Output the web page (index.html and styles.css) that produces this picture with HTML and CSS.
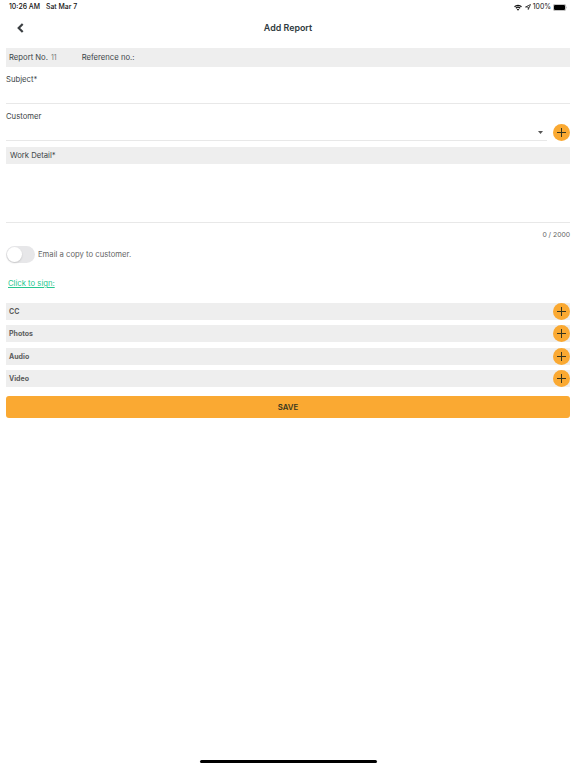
FILE: index.html
```
<!DOCTYPE html>
<html lang="en">
  <head>
    <meta charset="utf-8" />
    <title>Add Report</title>
    <link rel="stylesheet" href="styles.css">
  </head>

  <body>
    <div class="status-bar">
      <span class="time">10:26 AM</span>
      <span class="date">Sat Mar 7</span>
      <div class="status-icons">
        <svg class="wifi" width="8" height="7" viewBox="0 0 16 13">
          <path d="M1 5a10 10 0 0 1 14 0M3.7 8a6.2 6.2 0 0 1 8.6 0" fill="none" stroke="#111" stroke-width="2.3" />
          <path d="M5.6 10.2a3.5 3.5 0 0 1 4.8 0L8 12.8z" fill="#111" />
        </svg>
        <svg class="location" width="6" height="6" viewBox="0 0 12 12">
          <path d="M1 6L11 1L6.5 11V6z" fill="none" stroke="#222" stroke-width="1.6" />
        </svg>
        <span class="percent">100%</span>
        <svg class="battery" width="15" height="7" viewBox="0 0 15 7">
          <rect x="0.3" y="0.3" width="12.4" height="6.4" rx="1.6" fill="none" stroke="#888" stroke-width="0.6" />
          <rect x="1" y="1" width="11" height="5" rx="1" fill="#000" />
          <path d="M13.5 2.5q1 1 0 2z" fill="#888" />
        </svg>
      </div>
    </div>

    <div class="header">
      <svg class="back" width="7" height="10" viewBox="0 0 7 10">
        <path d="M5.7 1L1.7 5L5.7 9" fill="none" stroke="#3c4043" stroke-width="2.2" />
      </svg>
      <h1>Add Report</h1>
    </div>

    <form class="report-form">
      <div class="report-info">
        <span>Report No.</span>
        <span class="report-no">11</span>
        <span class="reference">Reference no.:</span>
      </div>

      <div class="field subject">Subject*</div>

      <div class="customer-row">
        <div class="field customer">
          <span>Customer</span>
          <svg class="caret" width="5" height="3" viewBox="0 0 5 3"><path d="M0 0h5L2.5 3z" fill="#555" /></svg>
        </div>
        <svg class="add" viewBox="0 0 17 17"><circle cx="8.5" cy="8.5" r="8.5" /><path d="M8.5 4v9M4 8.5h9" /></svg>
      </div>

      <div class="work-title">Work Detail*</div>
      <div class="work-text"></div>
      <div class="counter">0 / 2000</div>

      <div class="email-copy">
        <span class="toggle"><span class="knob"></span></span>
        <span>Email a copy to customer.</span>
      </div>

      <a class="sign" href="#">Click to sign:</a>

      <div class="sections">
        <div class="section">
          <span>CC</span>
          <svg class="add" viewBox="0 0 17 17"><circle cx="8.5" cy="8.5" r="8.5" /><path d="M8.5 4v9M4 8.5h9" /></svg>
        </div>
        <div class="section">
          <span>Photos</span>
          <svg class="add" viewBox="0 0 17 17"><circle cx="8.5" cy="8.5" r="8.5" /><path d="M8.5 4v9M4 8.5h9" /></svg>
        </div>
        <div class="section">
          <span>Audio</span>
          <svg class="add" viewBox="0 0 17 17"><circle cx="8.5" cy="8.5" r="8.5" /><path d="M8.5 4v9M4 8.5h9" /></svg>
        </div>
        <div class="section">
          <span>Video</span>
          <svg class="add" viewBox="0 0 17 17"><circle cx="8.5" cy="8.5" r="8.5" /><path d="M8.5 4v9M4 8.5h9" /></svg>
        </div>
      </div>

      <button class="save" type="button">SAVE</button>
    </form>

    <div class="home-bar"></div>
  </body>
</html>
```
FILE: styles.css
```
* {
  box-sizing: border-box;
}

body {
  display: flex;
  flex-direction: column;
  height: 768px;
  margin: 0;
  background: #ffffff;
  color: #3c4447;
  font-family: Inter, 'Liberation Sans', sans-serif;
  font-size: 7.7px;
  line-height: 10px;
}

svg {
  display: block;
  flex: none;
}

.status-bar {
  display: flex;
  align-items: center;
  height: 14px;
  padding: 0 8px 0 9px;
  color: #111111;
  font-size: 6.9px;
  font-weight: 500;
}

.status-bar .date {
  margin-left: 6px;
}

.status-icons {
  display: flex;
  align-items: center;
  margin-left: auto;
}

.wifi {
  margin-left: 1px;
}

.location {
  margin: 0 2px 0 3px;
}

.percent {
  font-weight: 400;
}

.battery {
  margin-left: 2px;
}

.header {
  display: grid;
  grid-template-columns: 1fr auto 1fr;
  align-items: center;
  height: 28px;
  padding: 0 17px;
}

.header h1 {
  margin: 0;
  color: #2f3b40;
  font-size: 8.9px;
  font-weight: 600;
}

.report-form {
  margin: 6px 6px 0;
}

.report-info {
  display: flex;
  align-items: center;
  height: 19px;
  padding: 1px 3px 0;
  background: #eeeeee;
}

.report-no {
  margin-left: 3px;
  color: #777777;
  font-size: 7px;
}

.reference {
  margin-left: 25px;
}

.field {
  border-bottom: 1px solid #e8e8e8;
}

.subject {
  height: 37px;
  padding-top: 8px;
}

.customer-row {
  display: flex;
  align-items: flex-end;
  justify-content: space-between;
  height: 37px;
}

.customer {
  display: flex;
  justify-content: space-between;
  width: 541px;
  height: 37px;
  padding-top: 8px;
}

.caret {
  margin: 19px 4px 0 0;
}

.add {
  width: 17px;
  height: 17px;
}

.add circle {
  fill: #faa932;
}

.add path {
  fill: none;
  stroke: #37361f;
  stroke-width: 1;
}

.work-title {
  height: 17px;
  margin-top: 6px;
  padding: 4px;
  background: #eeeeee;
}

.work-text {
  height: 59px;
  border-bottom: 1px solid #e8e8e8;
}

.counter {
  margin-top: 7px;
  color: #666666;
  font-size: 6.8px;
  text-align: right;
}

.email-copy {
  display: flex;
  align-items: center;
  gap: 3px;
  height: 17px;
  margin-top: 6px;
  color: #666666;
}

.toggle {
  width: 29px;
  height: 17px;
  padding: 1px;
  border-radius: 9px;
  background: #e7e7e9;
}

.knob {
  display: block;
  width: 15px;
  height: 15px;
  border-radius: 50%;
  background: #ffffff;
  box-shadow: 0 1px 2px rgba(0, 0, 0, 0.15);
}

.sign {
  display: block;
  margin: 16px 0 0 2px;
  color: #25c78f;
}

.sections {
  display: grid;
  gap: 5.6px;
  margin-top: 13.6px;
}

.section {
  display: flex;
  align-items: center;
  justify-content: space-between;
  height: 17px;
  padding-left: 3px;
  background: #eeeeee;
  color: #5c5c5c;
  font-size: 7px;
  font-weight: 700;
}

.section span {
  padding-top: 1px;
}

.save {
  display: block;
  width: 100%;
  height: 22px;
  margin-top: 9px;
  padding: 0;
  border: 0;
  border-radius: 3px;
  background: #faa932;
  color: #37361f;
  font-family: inherit;
  font-size: 7.8px;
  font-weight: 600;
}

.home-bar {
  width: 177px;
  height: 3px;
  margin: auto auto 5px;
  border-radius: 2px;
  background: #000000;
}
```
